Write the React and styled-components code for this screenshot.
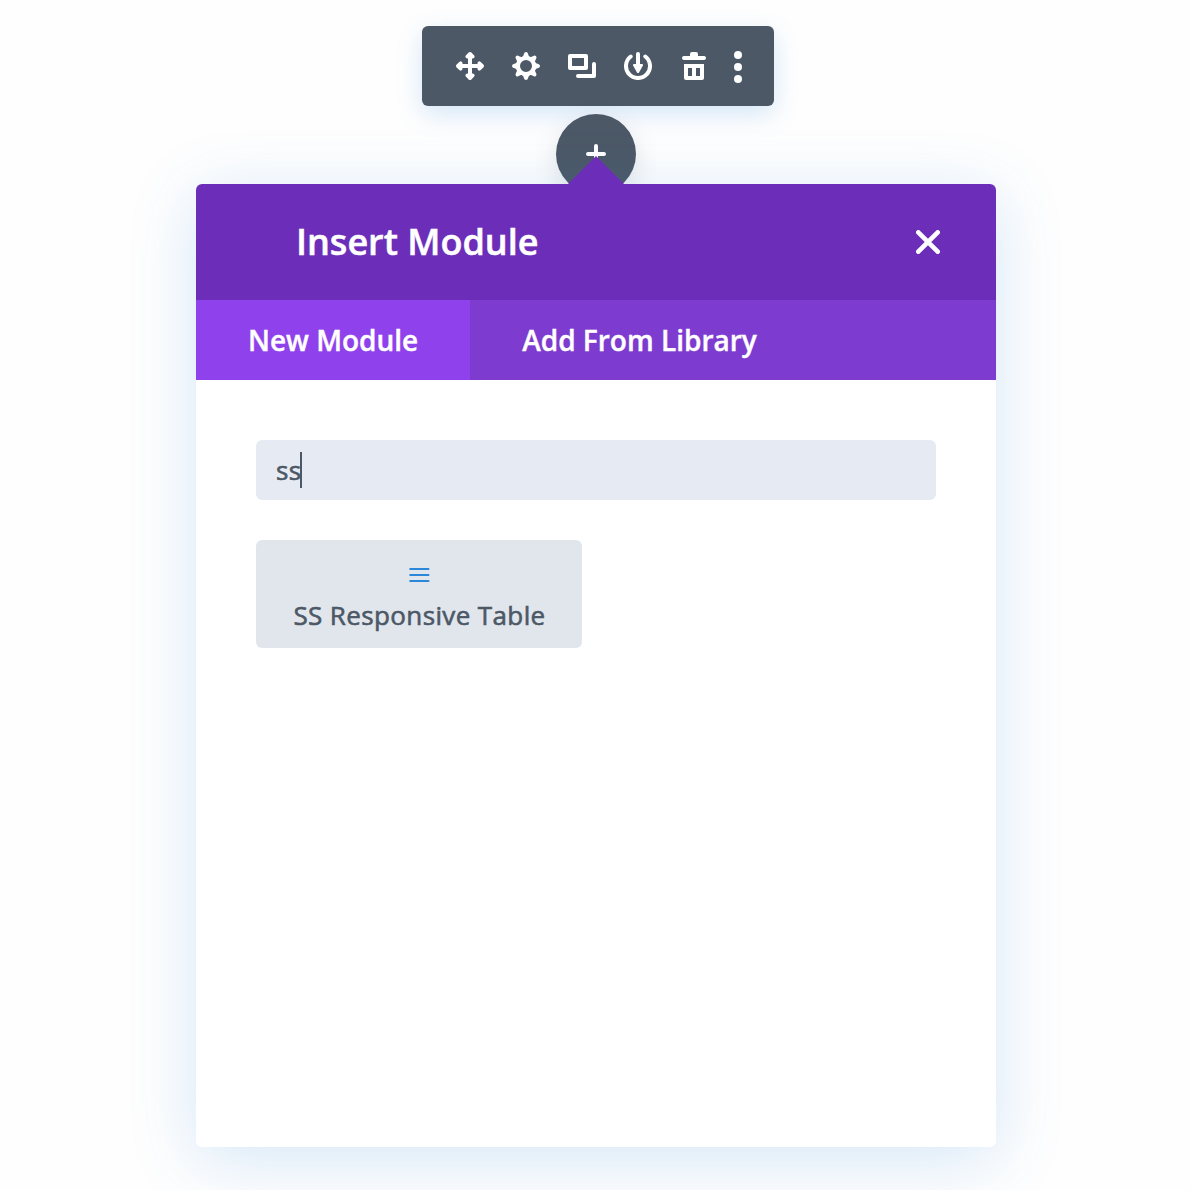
import React from 'react';
import styled, { createGlobalStyle } from 'styled-components';

const GlobalStyle = createGlobalStyle`
  *, *::before, *::after { box-sizing: border-box; }
  body {
    margin: 0;
    background: #fefefe;
    font-family: "Open Sans", "Noto Sans", sans-serif;
    overflow: hidden;
  }
`;

const Page = styled.main`
  height: 1190px;
  padding: 26px 0 0 2px;
  display: flex;
  flex-direction: column;
  align-items: center;
  overflow: hidden;
`;

const Toolbar = styled.div`
  display: flex;
  width: 352px;
  height: 80px;
  padding: 0 20px;
  margin-left: 4px;
  flex: none;
  background: #4c5866;
  border-radius: 6px;
  box-shadow: 0 8px 26px rgba(43, 135, 218, 0.2);
`;

const ToolButton = styled.button`
  display: flex;
  align-items: center;
  justify-content: center;
  width: ${({ $width }) => $width || 56}px;
  height: 80px;
  padding: 0;
  border: 0;
  background: none;
  color: #fff;
`;

const Glyph = styled.svg`
  display: block;
  flex: none;
`;

const AddButton = styled.button`
  display: flex;
  align-items: center;
  justify-content: center;
  flex: none;
  width: 80px;
  height: 80px;
  margin: 8px 0 -10px;
  padding: 0;
  border: 0;
  border-radius: 50%;
  background: #4c5866;
  box-shadow: 0 8px 24px rgba(76, 88, 102, 0.15);
  color: #fff;
`;

const Modal = styled.section`
  position: relative;
  display: flex;
  flex-direction: column;
  flex: none;
  width: 800px;
  height: 963px;
  background: #fff;
  border-radius: 6px;
  box-shadow: 0 12px 68px rgba(43, 135, 218, 0.2);

  &::before {
    content: "";
    position: absolute;
    left: 372px;
    top: -28px;
    width: 56px;
    height: 29px;
    background: #6c2eb9;
    clip-path: polygon(50% 0, 100% 28px, 100% 100%, 0 100%, 0 28px);
  }
`;

const ModalHeader = styled.header`
  display: flex;
  align-items: center;
  justify-content: space-between;
  height: 116px;
  padding: 0 56px 0 100px;
  background: #6c2eb9;
  border-radius: 6px 6px 0 0;
`;

const Title = styled.h1`
  margin: 0;
  font-size: 36px;
  line-height: 50px;
  font-weight: 600;
  color: #fff;
  -webkit-text-stroke: 0.5px #fff;
`;

const CloseButton = styled.button`
  display: flex;
  padding: 0;
  border: 0;
  background: none;
  color: #fff;
`;

const Tabs = styled.nav`
  display: flex;
  height: 80px;
  background: #7e3bd0;
`;

const Tab = styled.button`
  padding: 0 52px;
  border: 0;
  background: ${({ $active }) => ($active ? '#8f42ec' : 'transparent')};
  font: 600 28px/40px "Open Sans", "Noto Sans", sans-serif;
  color: #fff;
  -webkit-text-stroke: 0.4px #fff;
  white-space: nowrap;
`;

const Body = styled.div`
  display: flex;
  flex-direction: column;
  gap: 40px;
  padding: 60px;
`;

const SearchField = styled.div`
  display: flex;
  align-items: center;
  height: 60px;
  padding: 0 20px;
  border-radius: 6px;
  background: #e6ebf3;
  color: #4c5866;
  font-size: 26px;
  line-height: 36px;
  font-weight: 400;
  letter-spacing: 0.4px;
  -webkit-text-stroke: 0.6px #4c5866;
`;

const Caret = styled.span`
  width: 2px;
  height: 36px;
  margin-left: -2px;
  background: #4c5866;
`;

const ModuleCard = styled.button`
  display: flex;
  flex-direction: column;
  align-items: center;
  width: 326px;
  height: 108px;
  padding: 27px 0 0;
  border: 0;
  border-radius: 6px;
  background: #e1e6ed;
  color: #2b87da;
`;

const ModuleName = styled.span`
  margin-top: 14px;
  padding-left: 1px;
  font: 400 26px/36px "Open Sans", "Noto Sans", sans-serif;
  letter-spacing: 0.38px;
  color: #4c5866;
  -webkit-text-stroke: 0.6px #4c5866;
  white-space: nowrap;
`;

const QUARTER_TURNS = [0, 90, 180, 270];

function MoveIcon() {
  return (
    <Glyph width="28" height="28" viewBox="0 0 28 28" fill="currentColor">
      {QUARTER_TURNS.map((angle) => (
        <path
          key={angle}
          transform={`rotate(${angle} 14 14)`}
          d="M14 0Q14.800 0 15.400.6L18.200 3.600Q19.100 4.700 18.200 5.800Q17.300 6.800 16 6.500V16H12V6.500Q10.700 6.800 9.800 5.800Q8.900 4.700 9.800 3.600L12.600.6Q13.200 0 14 0Z"
        />
      ))}
    </Glyph>
  );
}

const GEAR_ANGLES = [0, 45, 90, 135, 180, 225, 270, 315];

function GearIcon() {
  return (
    <Glyph width="28" height="28" viewBox="0 0 28 28" fill="currentColor">
      <circle cx="14" cy="14" r="8" fill="none" stroke="currentColor" strokeWidth="4" />
      {GEAR_ANGLES.map((angle) => (
        <path
          key={angle}
          transform={`rotate(${angle} 14 14)`}
          d="M9.800 5.200Q11.600 4.200 12 1.700Q12.300 0 14 0Q15.700 0 16 1.700Q16.400 4.200 18.200 5.200L17 7H11Z"
        />
      ))}
    </Glyph>
  );
}

function DuplicateIcon() {
  return (
    <Glyph
      width="28"
      height="28"
      viewBox="0 0 28 28"
      fill="none"
      stroke="currentColor"
      strokeWidth="4"
      strokeLinecap="round"
      strokeLinejoin="round"
    >
      <rect x="2" y="4" width="16" height="12" />
      <path d="M26 12V24H10" />
    </Glyph>
  );
}

function SaveIcon() {
  return (
    <Glyph width="28" height="28" viewBox="0 0 28 28" fill="none">
      <path
        d="M6.700 4.500A12 12 0 1 0 21.300 4.500"
        stroke="currentColor"
        strokeWidth="4"
        strokeLinecap="round"
      />
      <path d="M14 2V14" stroke="currentColor" strokeWidth="4" strokeLinecap="round" />
      <path
        d="M10 12H18Q19.600 12 18.900 13.500L15.200 20.200Q14 22 12.800 20.200L9.100 13.500Q8.400 12 10 12Z"
        fill="currentColor"
      />
    </Glyph>
  );
}

function TrashIcon() {
  return (
    <Glyph width="24" height="28" viewBox="0 0 24 28" fill="currentColor">
      <path d="M8 4V2Q8 0 10 0H14Q16 0 16 2V4H22A2 2 0 0 1 22 8H2A2 2 0 0 1 2 4Z" />
      <path
        fillRule="evenodd"
        d="M2 12H22V26Q22 28 20 28H4Q2 28 2 26ZM6 16V24H10V16ZM14 16V24H18V16Z"
      />
    </Glyph>
  );
}

function MoreIcon() {
  return (
    <Glyph width="8" height="34" viewBox="0 0 8 34" fill="currentColor">
      <circle cx="4" cy="6" r="4" />
      <circle cx="4" cy="18" r="4" />
      <circle cx="4" cy="30" r="4" />
    </Glyph>
  );
}

function PlusIcon() {
  return (
    <Glyph
      width="20"
      height="20"
      viewBox="0 0 20 20"
      stroke="currentColor"
      strokeWidth="4"
      strokeLinecap="round"
    >
      <path d="M10 2V18M2 10H18" />
    </Glyph>
  );
}

function CloseIcon() {
  return (
    <Glyph
      width="24"
      height="24"
      viewBox="0 0 24 24"
      stroke="currentColor"
      strokeWidth="4.6"
      strokeLinecap="round"
    >
      <path d="M2.300 2.300L21.700 21.700M21.700 2.300L2.300 21.700" />
    </Glyph>
  );
}

function LinesIcon() {
  return (
    <Glyph
      width="22"
      height="16"
      viewBox="0 0 22 16"
      stroke="currentColor"
      strokeWidth="2"
      strokeLinecap="round"
    >
      <path d="M2.200 2H20.500M2.200 8H20.500M2.200 14H20.500" />
    </Glyph>
  );
}

const TOOLS = [
  { label: 'Move', Icon: MoveIcon },
  { label: 'Settings', Icon: GearIcon },
  { label: 'Duplicate', Icon: DuplicateIcon },
  { label: 'Save', Icon: SaveIcon },
  { label: 'Delete', Icon: TrashIcon },
  { label: 'More', Icon: MoreIcon, width: 32 },
];

export default function App() {
  return (
    <>
      <GlobalStyle />
      <Page>
        <Toolbar>
          {TOOLS.map(({ label, Icon, width }) => (
            <ToolButton key={label} aria-label={label} $width={width}>
              <Icon />
            </ToolButton>
          ))}
        </Toolbar>
        <AddButton aria-label="Add">
          <PlusIcon />
        </AddButton>
        <Modal>
          <ModalHeader>
            <Title>Insert Module</Title>
            <CloseButton aria-label="Close">
              <CloseIcon />
            </CloseButton>
          </ModalHeader>
          <Tabs>
            <Tab $active>New Module</Tab>
            <Tab>Add From Library</Tab>
          </Tabs>
          <Body>
            <SearchField>
              ss
              <Caret />
            </SearchField>
            <ModuleCard>
              <LinesIcon />
              <ModuleName>SS Responsive Table</ModuleName>
            </ModuleCard>
          </Body>
        </Modal>
      </Page>
    </>
  );
}
